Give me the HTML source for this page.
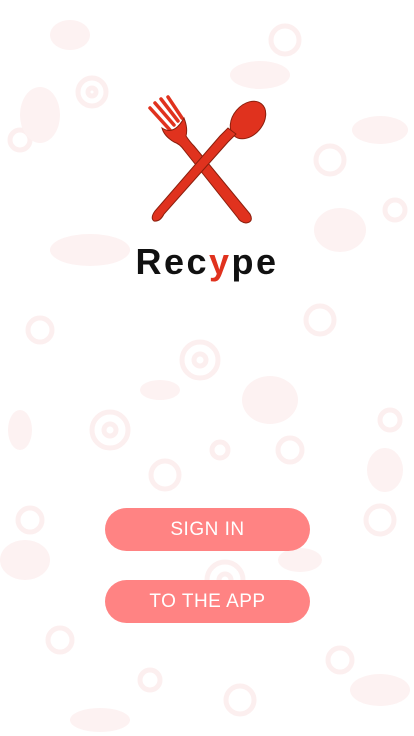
<!DOCTYPE html>
<html><head><meta charset="utf-8"><style>
html,body{margin:0;padding:0}
body{width:414px;height:736px;position:relative;overflow:hidden;background:#fff;font-family:"Liberation Sans",sans-serif}
.bg{position:absolute;left:0;top:0}
.btn{position:absolute;left:105px;width:205px;height:43px;border-radius:22px;background:#ff8383;color:#fff;font-size:19px;text-align:center;line-height:43px;letter-spacing:0.5px}
.title{position:absolute;left:0;width:414px;top:241px;text-align:center;font-size:36px;letter-spacing:2.5px;color:#111;font-weight:bold}
</style></head><body>
<svg class="bg" width="414" height="736" viewBox="0 0 414 736">
<g fill="none" stroke="#fcefef" stroke-width="5">
<circle cx="92" cy="92" r="14"/><circle cx="92" cy="92" r="4"/>
<circle cx="285" cy="40" r="14"/><circle cx="20" cy="140" r="10"/>
<circle cx="330" cy="160" r="14"/><circle cx="395" cy="210" r="10"/>
<circle cx="200" cy="360" r="18"/><circle cx="200" cy="360" r="6"/>
<circle cx="110" cy="430" r="18"/><circle cx="110" cy="430" r="6"/>
<circle cx="165" cy="475" r="14"/><circle cx="290" cy="450" r="12"/>
<circle cx="390" cy="420" r="10"/><circle cx="30" cy="520" r="12"/>
<circle cx="380" cy="520" r="14"/><circle cx="60" cy="640" r="12"/>
<circle cx="240" cy="700" r="14"/><circle cx="340" cy="660" r="12"/>
<circle cx="150" cy="680" r="10"/><circle cx="40" cy="330" r="12"/>
<circle cx="320" cy="320" r="14"/><circle cx="220" cy="450" r="8"/>
<circle cx="225" cy="580" r="18"/><circle cx="225" cy="580" r="6"/>
</g>
<g fill="#fdf2f2">
<ellipse cx="40" cy="115" rx="20" ry="28"/><ellipse cx="70" cy="35" rx="20" ry="15"/>
<ellipse cx="260" cy="75" rx="30" ry="14"/><ellipse cx="380" cy="130" rx="28" ry="14"/>
<ellipse cx="90" cy="250" rx="40" ry="16"/><ellipse cx="340" cy="230" rx="26" ry="22"/>
<ellipse cx="270" cy="400" rx="28" ry="24"/><ellipse cx="25" cy="560" rx="25" ry="20"/>
<ellipse cx="385" cy="470" rx="18" ry="22"/><ellipse cx="160" cy="390" rx="20" ry="10"/>
<ellipse cx="380" cy="690" rx="30" ry="16"/><ellipse cx="20" cy="430" rx="12" ry="20"/>
<ellipse cx="100" cy="720" rx="30" ry="12"/><ellipse cx="300" cy="560" rx="22" ry="12"/>
</g>
</svg>
<svg style="position:absolute;left:140px;top:92px" width="140" height="140" viewBox="0 0 140 140">
<g stroke="#8a1e0c" stroke-width="1" fill="#e0321e">
<!-- fork tines -->
<path d="M10 16 L30 38 M15 11 L34 33 M21 7 L38 29 M28 5 L42 26" stroke="#e0321e" stroke-width="3.5" stroke-linecap="round" fill="none"/>
<path d="M22 36 Q34 44 44 26 Q48 36 46 44 Q50 50 54 54 L110 122 Q114 130 106 131 Q100 130 98 126 L44 58 Q40 52 34 50 Q24 44 22 36 Z"/>
<!-- spoon -->
<ellipse cx="108" cy="28" rx="15" ry="21" transform="rotate(40 108 28)"/>
<path d="M96 42 Q92 46 88 50 L24 122 Q20 130 14 129 Q10 126 15 119 L80 44 Q84 40 88 36 Z"/>
</g>
</svg>
<div class="title">Rec<span style="color:#e0321e">y</span>pe</div>
<div class="btn" style="top:508px">SIGN IN</div>
<div class="btn" style="top:580px">TO THE APP</div>
</body></html>
